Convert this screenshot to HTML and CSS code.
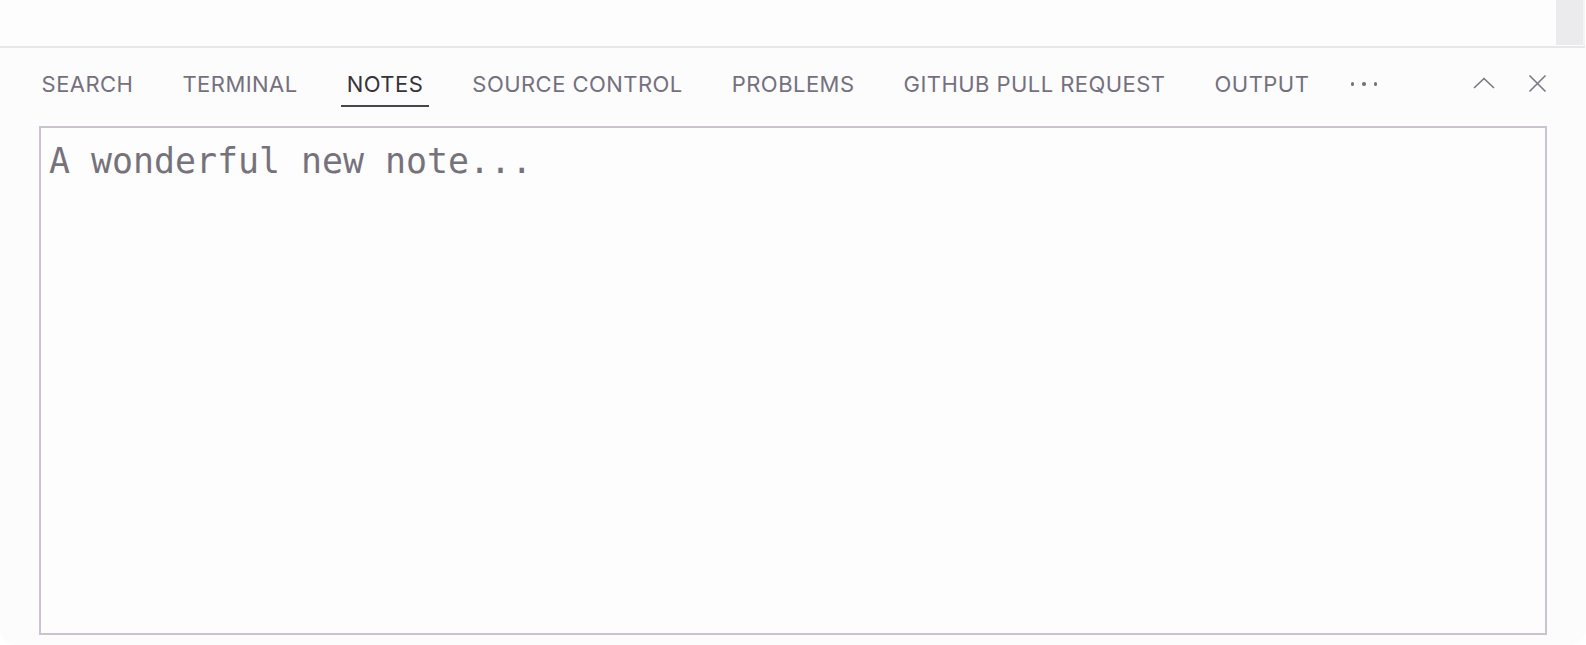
FILE: index.html
```html
<!DOCTYPE html>
<html lang="en">
<head>
<meta charset="utf-8">
<title>Notes panel</title>
<link rel="stylesheet" href="styles.css">
</head>
<body>
<div class="editor-strip">
  <div class="editor-fill"></div>
  <div class="scrollbar"></div>
  <div class="scroll-edge"></div>
</div>
<div class="panel">
  <div class="tabbar">
    <div class="tabs">
      <div class="tab">SEARCH</div>
      <div class="tab">TERMINAL</div>
      <div class="tab active">NOTES</div>
      <div class="tab">SOURCE CONTROL</div>
      <div class="tab">PROBLEMS</div>
      <div class="tab">GITHUB PULL REQUEST</div>
      <div class="tab">OUTPUT</div>
      <div class="more"><span class="dot"></span><span class="dot"></span><span class="dot"></span></div>
    </div>
    <div class="actions">
      <svg class="icon chevron" width="22" height="12" viewBox="0 0 22 12"><polyline points="1,11 11,1.5 21,11" fill="none" stroke="currentColor" stroke-width="1.6"/></svg>
      <svg class="icon close" width="19" height="19" viewBox="0 0 19 19"><path d="M1.5 1.5 L17.5 17.5 M17.5 1.5 L1.5 17.5" fill="none" stroke="currentColor" stroke-width="1.6"/></svg>
    </div>
  </div>
  <div class="notes-body">
    <textarea class="note" placeholder="A wonderful new note..."></textarea>
  </div>
</div>
</body>
</html>
```
FILE: styles.css
```css
html, body {
  margin: 0;
  padding: 0;
  background: #ffffff;
  height: 100%;
  overflow: hidden;
}
body {
  font-family: Inter, "Noto Sans", sans-serif;
}
.editor-strip {
  display: flex;
  height: 46px;
  background: #fdfdfd;
  border-bottom: 2px solid #e7e6e9;
  margin-right: 1px;
}
.editor-fill { flex: 1; }
.scrollbar {
  width: 27px;
  height: 45px;
  background: #ebebed;
}
.scroll-edge {
  width: 2px;
  background: #f4f4f5;
}
.panel {
  height: calc(100vh - 48px);
  display: flex;
  flex-direction: column;
  background: #fcfcfc;
  border-radius: 0 0 16px 16px;
  box-sizing: border-box;
  padding: 0 39px 10px 39px;
}
.tabbar {
  display: flex;
  align-items: flex-start;
  padding-top: 23px;
}
.tabs {
  display: flex;
  align-items: flex-start;
  gap: 37.9px;
  flex: 1;
  margin-left: -3px;
}
.tab {
  font-size: 22px;
  line-height: 26px;
  color: #75707e;
  padding: 0 5.6px 8px;
  border-bottom: 2px solid transparent;
  letter-spacing: 0.45px;
  white-space: nowrap;
}
.tab.active {
  color: #36343a;
  border-bottom-color: #48454d;
}
.more {
  display: flex;
  gap: 8px;
  margin-left: -2px;
  padding-top: 11px;
}
.dot {
  width: 3.5px;
  height: 3.5px;
  border-radius: 50%;
  background: #77737d;
}
.actions {
  display: flex;
  align-items: center;
  gap: 33px;
  color: #7a7682;
  padding-top: 3px;
}
.chevron { margin-top: -2px; }
.notes-body {
  flex: 1;
  display: flex;
  margin-top: 19px;
}
.note {
  flex: 1;
  resize: none;
  margin: 0;
  border: 2px solid #cbc4d0;
  background: #fdfdfd;
  padding: 13px 8px;
  font-family: "DejaVu Sans Mono", "Liberation Mono", monospace;
  font-size: 34.9px;
  color: #38363c;
  outline: none;
}
.note::placeholder {
  color: #76727c;
  opacity: 1;
}
```
